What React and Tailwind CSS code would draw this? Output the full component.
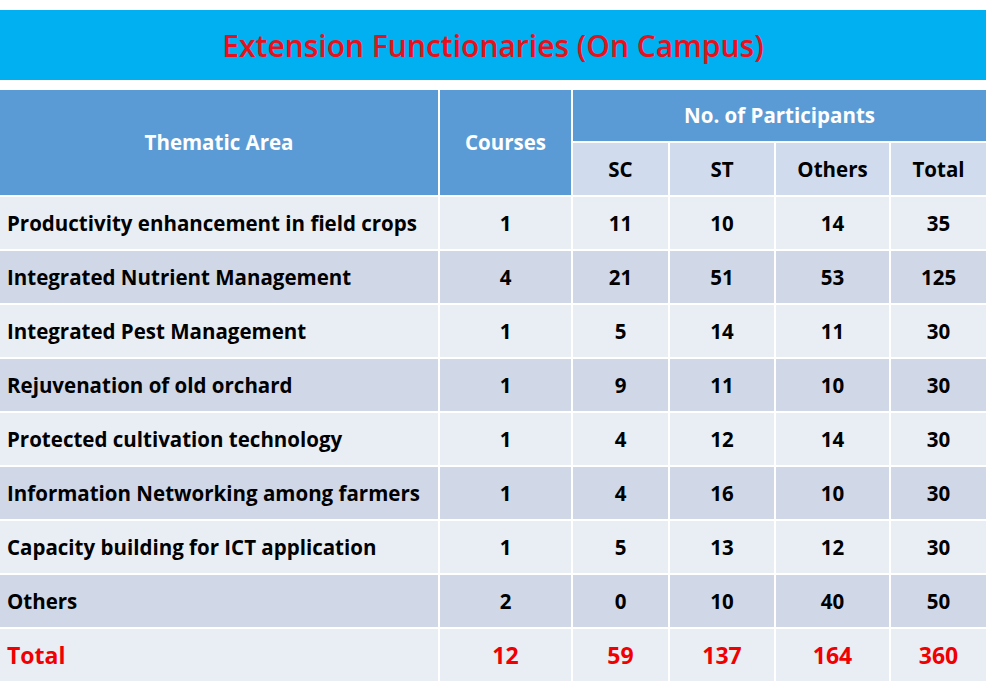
import React from "react";

const rows = [
  ["Productivity enhancement in field crops", 1, 11, 10, 14, 35],
  ["Integrated Nutrient Management", 4, 21, 51, 53, 125],
  ["Integrated Pest Management", 1, 5, 14, 11, 30],
  ["Rejuvenation of old orchard", 1, 9, 11, 10, 30],
  ["Protected cultivation technology", 1, 4, 12, 14, 30],
  ["Information Networking among farmers", 1, 4, 16, 10, 30],
  ["Capacity building for ICT application", 1, 5, 13, 12, 30],
  ["Others", 2, 0, 10, 40, 50],
];

const font = { fontFamily: "'Open Sans', Lato, sans-serif" };

const App = () => {
  return (
    <div className="w-[986px] h-[681px] overflow-hidden bg-white" style={font}>
      <div className="mt-[10px] h-[70px] bg-[#00b0f0] flex items-center justify-center">
        <h1 className="text-[30px] font-semibold text-[#e8111b]">
          Extension Functionaries (On Campus)
        </h1>
      </div>
      <table className="mt-[10px] w-[986px] border-collapse table-fixed text-[20.5px] font-bold">
        <colgroup>
          <col className="w-[439px]" />
          <col className="w-[133px]" />
          <col className="w-[97px]" />
          <col className="w-[106px]" />
          <col className="w-[115px]" />
          <col className="w-[96px]" />
        </colgroup>
        <thead>
          <tr className="h-[52px] bg-[#5b9bd5] text-white">
            <th rowSpan={2} className="border-2 border-white border-t-0 border-l-0 font-bold">
              Thematic Area
            </th>
            <th rowSpan={2} className="border-2 border-white border-t-0 font-bold">
              Courses
            </th>
            <th colSpan={4} className="border-2 border-white border-t-0 border-r-0 font-bold">
              No. of Participants
            </th>
          </tr>
          <tr className="h-[54px] bg-[#d0dbee] text-black">
            <th className="border-2 border-white font-bold">SC</th>
            <th className="border-2 border-white font-bold">ST</th>
            <th className="border-2 border-white font-bold">Others</th>
            <th className="border-2 border-white border-r-0 font-bold">Total</th>
          </tr>
        </thead>
        <tbody>
          {rows.map((r, i) => (
            <tr key={i} className={`h-[54px] ${i % 2 === 0 ? "bg-[#e9edf4]" : "bg-[#d0d8e8]"}`}>
              <td className="border-2 border-white border-l-0 pl-[7px] text-left">{r[0]}</td>
              {r.slice(1).map((v, j) => (
                <td key={j} className={`border-2 border-white text-center ${j === 4 ? "border-r-0" : ""}`}>
                  {v}
                </td>
              ))}
            </tr>
          ))}
          <tr className="h-[54px] bg-[#e9edf4] text-[#f00000] text-[23px]">
            <td className="border-2 border-white border-l-0 border-b-0 pl-[7px] text-left">Total</td>
            <td className="border-2 border-white border-b-0 text-center">12</td>
            <td className="border-2 border-white border-b-0 text-center">59</td>
            <td className="border-2 border-white border-b-0 text-center">137</td>
            <td className="border-2 border-white border-b-0 text-center">164</td>
            <td className="border-2 border-white border-b-0 border-r-0 text-center">360</td>
          </tr>
        </tbody>
      </table>
    </div>
  );
};

export default App;
